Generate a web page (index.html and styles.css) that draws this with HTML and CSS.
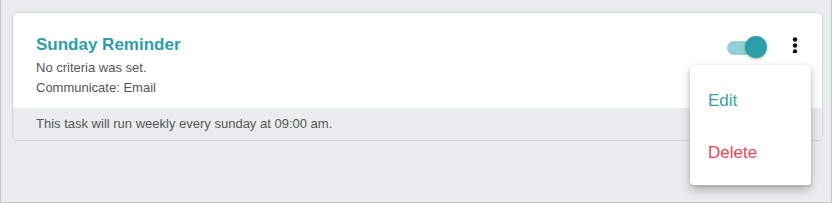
FILE: index.html
```html
<!DOCTYPE html>
<html>
<head>
<meta charset="utf-8">
<link rel="stylesheet" href="styles.css">
</head>
<body>
<div class="frame">
  <div class="card">
    <div class="card-head">
      <div class="info">
        <div class="title">Sunday Reminder</div>
        <div class="line">No criteria was set.</div>
        <div class="line">Communicate: Email</div>
      </div>
      <div class="actions">
        <div class="switch">
          <span class="track"></span>
          <span class="knob"></span>
        </div>
        <svg class="kebab" width="6" height="16" viewBox="0 0 6 16">
          <circle cx="3" cy="2.5" r="2.2" fill="#111"/>
          <circle cx="3" cy="8.5" r="2.2" fill="#111"/>
          <circle cx="3" cy="14.5" r="2.2" fill="#111"/>
        </svg>
      </div>
    </div>
    <div class="card-foot">This task will run weekly every sunday at 09:00 am.</div>
  </div>
  <div class="menu">
    <div class="menu-item edit">Edit</div>
    <div class="menu-item delete">Delete</div>
  </div>
</div>
</body>
</html>
```

FILE: styles.css
```css
* { box-sizing: border-box; }
html, body { margin: 0; padding: 0; }
body {
  font-family: "Liberation Sans", Arial, sans-serif;
  background: #eaeded;
}
.frame {
  position: relative;
  width: 832px;
  height: 203px;
  padding: 12px 8px 0 11px;
  background: #eaeded;
  border-left: 1px solid #c3c6c6;
  border-right: 1px solid #c3c6c6;
  border-bottom: 1px solid #c3c6c6;
}
.card {
  width: 811px;
  background: #fff;
  border: 1px solid #d2d4d4;
  border-radius: 5px;
  overflow: hidden;
}
.card-head {
  display: flex;
  justify-content: space-between;
  align-items: flex-start;
  padding: 22px 24px 10px 23px;
}
.title {
  font-size: 17px;
  font-weight: bold;
  line-height: 20px;
  color: #2b9ea8;
  margin-bottom: 3px;
}
.line {
  font-size: 13px;
  line-height: 20px;
  color: #555;
}
.actions {
  display: flex;
  align-items: flex-start;
  margin-top: 1px;
}
.switch {
  position: relative;
  width: 40px;
  height: 24px;
}
.track {
  position: absolute;
  left: 0;
  top: 5px;
  width: 34px;
  height: 14px;
  border-radius: 7px;
  background: #93d0d5;
}
.knob {
  position: absolute;
  left: 18px;
  top: 0;
  width: 22px;
  height: 22px;
  border-radius: 50%;
  background: #2b9ea8;
  box-shadow: 0 1px 3px rgba(0,0,0,0.3);
}
.kebab {
  display: block;
  margin-left: 25px;
  margin-top: 1px;
}
.card-foot {
  background: #eaeded;
  padding: 6px 23px;
  font-size: 13px;
  line-height: 20px;
  color: #555;
}
.menu {
  position: absolute;
  left: 689px;
  top: 65px;
  width: 121px;
  padding: 10px 0 6px;
  background: #fff;
  border-radius: 4px;
  box-shadow: 0 5px 10px rgba(0,0,0,0.25), 0 1px 3px rgba(0,0,0,0.12);
}
.menu-item {
  height: 52px;
  line-height: 52px;
  padding-left: 18px;
  font-size: 17px;
}
.edit { color: #3a9fa8; }
.delete { color: #ee4359; }
```
